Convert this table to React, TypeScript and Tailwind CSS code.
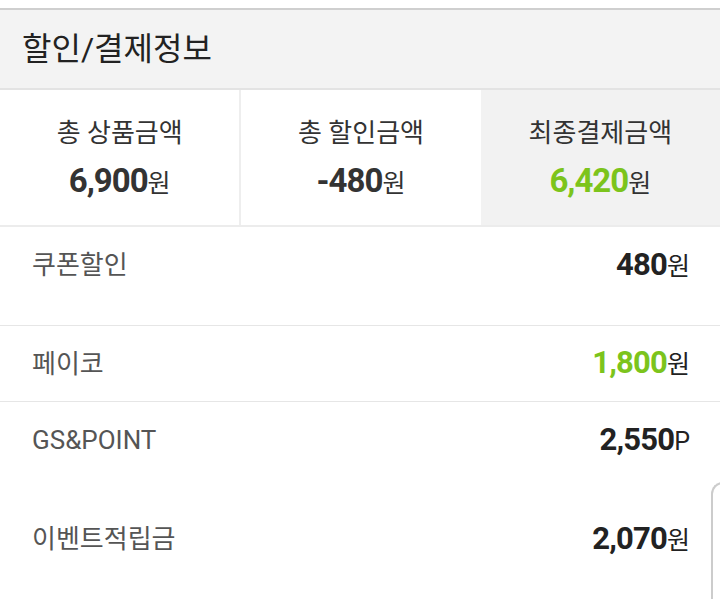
import React from "react";

const font = { fontFamily: "Roboto, 'Noto Sans CJK KR', 'Noto Sans', sans-serif" };

function Summary({ label, value, green, shaded }: { label: string; value: string; green?: boolean; shaded?: boolean }) {
  return (
    <div className={`flex flex-1 flex-col items-center pt-[26px] ${shaded ? "bg-[#f2f2f2]" : "bg-white"}`}>
      <div className="text-[26px] leading-[34px] text-[#333]">{label}</div>
      <div className="mt-[12px] flex items-baseline leading-[38px]">
        <span className={`text-[33px] font-bold tracking-[-1px] ${green ? "text-[#7cc41c]" : "text-[#333]"}`}>{value}</span>
        <span className="text-[25px] text-[#333]">원</span>
      </div>
    </div>
  );
}

function Row({ label, value, unit, green, h, center, border }: { label: string; value: string; unit: string; green?: boolean; h: string; center?: boolean; border?: boolean }) {
  return (
    <div className={`flex justify-between pl-[32px] pr-[30px] ${h} ${center ? "items-center" : "items-start pt-[20px]"} ${border ? "border-b border-[#e6e6e6]" : ""}`}>
      <div className="text-[26px] leading-[36px] text-[#555]">{label}</div>
      <div className="flex items-baseline leading-[36px]">
        <span className={`text-[31px] font-bold tracking-[-0.8px] ${green ? "text-[#7cc41c]" : "text-[#222]"}`}>{value}</span>
        <span className="text-[25px] text-[#222]">{unit}</span>
      </div>
    </div>
  );
}

export default function App() {
  return (
    <div className="relative h-[599px] w-[720px] overflow-hidden bg-white" style={font}>
      <div className="h-[8px] bg-white" />
      <div className="h-[2px] bg-[#cfcfcf]" />
      <div className="flex h-[80px] items-center border-b-2 border-[#e3e3e3] bg-[#f3f3f3] pl-[22px]">
        <span className="text-[32px] text-[#222]">할인/결제정보</span>
      </div>
      <div className="flex h-[137px] border-b-2 border-[#ececec]">
        <Summary label="총 상품금액" value="6,900" />
        <div className="w-[2px] bg-[#eeeeee]" />
        <Summary label="총 할인금액" value="-480" />
        <Summary label="최종결제금액" value="6,420" green shaded />
      </div>
      <Row label="쿠폰할인" value="480" unit="원" h="h-[99px]" border />
      <Row label="페이코" value="1,800" unit="원" green h="h-[76px]" center border />
      <Row label="GS&POINT" value="2,550" unit="P" h="h-[99px]" />
      <Row label="이벤트적립금" value="2,070" unit="원" h="h-[99px]" />
      <div className="absolute left-[711px] top-[482px] h-[200px] w-[40px] rounded-tl-[12px] border-l-2 border-t-2 border-[#cccccc] bg-white" />
    </div>
  );
}
